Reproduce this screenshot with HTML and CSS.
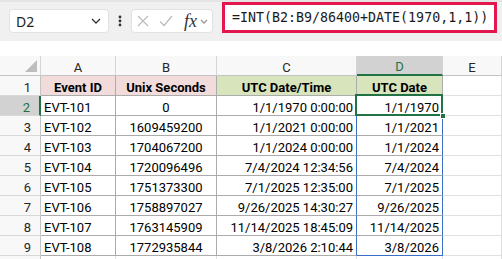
FILE: index.html
```html
<!DOCTYPE html>
<html lang="en">

<head>
    <meta charset="UTF-8">
    <meta name="viewport" content="width=device-width, initial-scale=1.0">
    <title>Unix seconds to UTC date</title>
    <link rel="stylesheet" href="styles.css">
</head>

<body>
    <div class="toolbar">
        <div class="name-box">
            <span>D2</span>
            <svg class="chevron" width="10" height="6" viewBox="0 0 10 6"><path d="M1 1 L5 5 L9 1" /></svg>
        </div>
        <svg class="dots" width="4" height="12" viewBox="0 0 4 12">
            <circle cx="2" cy="2" r="1.4" />
            <circle cx="2" cy="6" r="1.4" />
            <circle cx="2" cy="10" r="1.4" />
        </svg>
        <div class="fx-box">
            <svg class="cancel" width="12" height="12" viewBox="0 0 12 12"><path d="M1 1 L11 11 M11 1 L1 11" /></svg>
            <svg class="enter" width="14" height="12" viewBox="0 0 14 12"><path d="M1 6.5 L5 10.5 L13 1" /></svg>
            <span class="fx">fx</span>
            <svg class="chevron small" width="8" height="5" viewBox="0 0 8 5"><path d="M1 1 L4 4 L7 1" /></svg>
        </div>
        <div class="formula">=INT(B2:B9/86400+DATE(1970,1,1))</div>
    </div>

    <table class="sheet">
        <tr>
            <th class="corner"><span class="tri"></span></th>
            <th class="col-head w-a">A</th>
            <th class="col-head w-b">B</th>
            <th class="col-head w-c">C</th>
            <th class="col-head w-d sel">D</th>
            <th class="col-head w-e">E</th>
        </tr>
        <tr>
            <th class="row-head">1</th>
            <td class="title pink">Event ID</td>
            <td class="title pink">Unix Seconds</td>
            <td class="title green">UTC Date/Time</td>
            <td class="title green">UTC Date</td>
            <td class="empty"></td>
        </tr>
        <tr>
            <th class="row-head sel">2</th>
            <td>EVT-101</td>
            <td class="num">0</td>
            <td class="dt rng-left">1/1/1970 0:00:00</td>
            <td class="dt rng active">1/1/1970</td>
            <td class="empty"></td>
        </tr>
        <tr>
            <th class="row-head">3</th>
            <td>EVT-102</td>
            <td class="num">1609459200</td>
            <td class="dt rng-left">1/1/2021 0:00:00</td>
            <td class="dt rng">1/1/2021</td>
            <td class="empty"></td>
        </tr>
        <tr>
            <th class="row-head">4</th>
            <td>EVT-103</td>
            <td class="num">1704067200</td>
            <td class="dt rng-left">1/1/2024 0:00:00</td>
            <td class="dt rng">1/1/2024</td>
            <td class="empty"></td>
        </tr>
        <tr>
            <th class="row-head">5</th>
            <td>EVT-104</td>
            <td class="num">1720096496</td>
            <td class="dt rng-left">7/4/2024 12:34:56</td>
            <td class="dt rng">7/4/2024</td>
            <td class="empty"></td>
        </tr>
        <tr>
            <th class="row-head">6</th>
            <td>EVT-105</td>
            <td class="num">1751373300</td>
            <td class="dt rng-left">7/1/2025 12:35:00</td>
            <td class="dt rng">7/1/2025</td>
            <td class="empty"></td>
        </tr>
        <tr>
            <th class="row-head">7</th>
            <td>EVT-106</td>
            <td class="num">1758897027</td>
            <td class="dt rng-left">9/26/2025 14:30:27</td>
            <td class="dt rng">9/26/2025</td>
            <td class="empty"></td>
        </tr>
        <tr>
            <th class="row-head">8</th>
            <td>EVT-107</td>
            <td class="num">1763145909</td>
            <td class="dt rng-left">11/14/2025 18:45:09</td>
            <td class="dt rng">11/14/2025</td>
            <td class="empty"></td>
        </tr>
        <tr>
            <th class="row-head">9</th>
            <td>EVT-108</td>
            <td class="num">1772935844</td>
            <td class="dt rng-left">3/8/2026 2:10:44</td>
            <td class="dt rng rng-end">3/8/2026</td>
            <td class="empty"></td>
        </tr>
        <tr>
            <th class="row-head"></th>
            <td class="empty"></td>
            <td class="empty"></td>
            <td class="empty"></td>
            <td class="empty"></td>
            <td class="empty"></td>
        </tr>
    </table>
</body>

</html>
```

FILE: styles.css
```css
body {
    margin: 0;
    background-color: #fff;
    font-family: Roboto, "Liberation Sans", sans-serif;
    overflow: hidden;
}

/* formula bar */

.toolbar {
    height: 41px;
    box-sizing: border-box;
    display: flex;
    align-items: flex-end;
    padding: 0 0 8px 9px;
    margin-bottom: 15px;
    background: linear-gradient(#e4e4e4 0, #e4e4e4 2px, #f0f0f0 2px);
}

.name-box,
.fx-box {
    height: 24px;
    box-sizing: border-box;
    display: flex;
    align-items: center;
    background-color: #fff;
    border: 1px solid #e2e2e2;
    border-radius: 4px;
}

.name-box {
    width: 100px;
    justify-content: space-between;
    padding: 0 7px 0 6px;
    font-family: "Noto Sans", "Open Sans", sans-serif;
    font-size: 14px;
    color: #222;
}

.chevron path {
    fill: none;
    stroke: #333;
    stroke-width: 1.3;
}

.chevron.small path {
    stroke: #9a9a9a;
}

.dots {
    margin: 0 9px 6px 9px;
    fill: #333;
}

.fx-box {
    width: 82px;
    padding-left: 5px;
}

.cancel path,
.enter path {
    fill: none;
    stroke: #bcbcbc;
    stroke-width: 1.2;
}

.enter {
    margin-left: 10px;
}

.fx {
    margin-left: 11px;
    font-family: "Liberation Serif", serif;
    font-style: italic;
    font-size: 18px;
    color: #333;
    line-height: 1;
}

.chevron.small {
    margin-left: 3px;
}

.formula {
    width: 275px;
    height: 31px;
    box-sizing: border-box;
    margin-left: 9px;
    padding-left: 7px;
    display: flex;
    align-items: center;
    background-color: #fff;
    border: 3px solid #e3174e;
    font-family: "DejaVu Sans Mono", "Liberation Mono", monospace;
    font-size: 13.3px;
    color: #1a1a1a;
}

/* grid */

.sheet {
    border-collapse: separate;
    border-spacing: 0;
    table-layout: fixed;
    width: 502px;
    font-size: 13px;
    color: #000;
}

.sheet th,
.sheet td {
    box-sizing: border-box;
    height: 20px;
    padding: 0 3px;
    line-height: 15px;
    vertical-align: bottom;
    white-space: nowrap;
    text-align: left;
    font-weight: normal;
    border-right: 1px solid #ababab;
    border-bottom: 1px solid #ababab;
}

.corner {
    width: 41px;
    position: relative;
}

.w-a { width: 75px; }
.w-b { width: 101px; }
.w-c { width: 140px; }
.w-d { width: 86px; }
.w-e { width: 59px; }

.sheet .corner,
.sheet .col-head {
    background-color: #f8f8f8;
    border-right-color: #d4d4d4;
    border-bottom-color: #c4c4c4;
}

.sheet .col-head {
    text-align: center;
    color: #262626;
}

.sheet .col-head.sel {
    background-color: #d2d2d2;
    color: #217346;
    border-bottom: 2px solid #217346;
}

.tri {
    position: absolute;
    right: 3px;
    bottom: 3px;
    width: 0;
    height: 0;
    border-left: 12px solid transparent;
    border-bottom: 12px solid #bdbdbd;
}

.sheet .row-head {
    text-align: right;
    padding-right: 9px;
    background-color: #f8f8f8;
    color: #262626;
    border-right-color: #c4c4c4;
    border-bottom-color: #d8d8d8;
}

.sheet .row-head.sel {
    background-color: #d2d2d2;
    color: #217346;
    border-right: 2px solid #217346;
}

.sheet .title {
    font-weight: bold;
    text-align: center;
}

.pink {
    background-color: #f2dcdb;
}

.green {
    background-color: #d8e4bc;
}

.sheet .num {
    text-align: center;
}

.sheet .dt {
    text-align: right;
}

.sheet .empty {
    border-right-color: #e1e1e1;
    border-bottom-color: #e1e1e1;
}

.sheet .rng-left,
.sheet .rng {
    border-right-color: #3a6fc8;
}

.sheet .rng-end {
    border-bottom-color: #3a6fc8;
}

.active {
    position: relative;
}

.active::before {
    content: "";
    position: absolute;
    left: -2px;
    top: -2px;
    right: -1px;
    bottom: -1px;
    border: 2px solid #217346;
}

.active::after {
    content: "";
    position: absolute;
    right: -4px;
    bottom: -4px;
    width: 4px;
    height: 4px;
    background-color: #217346;
    border: 1px solid #fff;
}
```
